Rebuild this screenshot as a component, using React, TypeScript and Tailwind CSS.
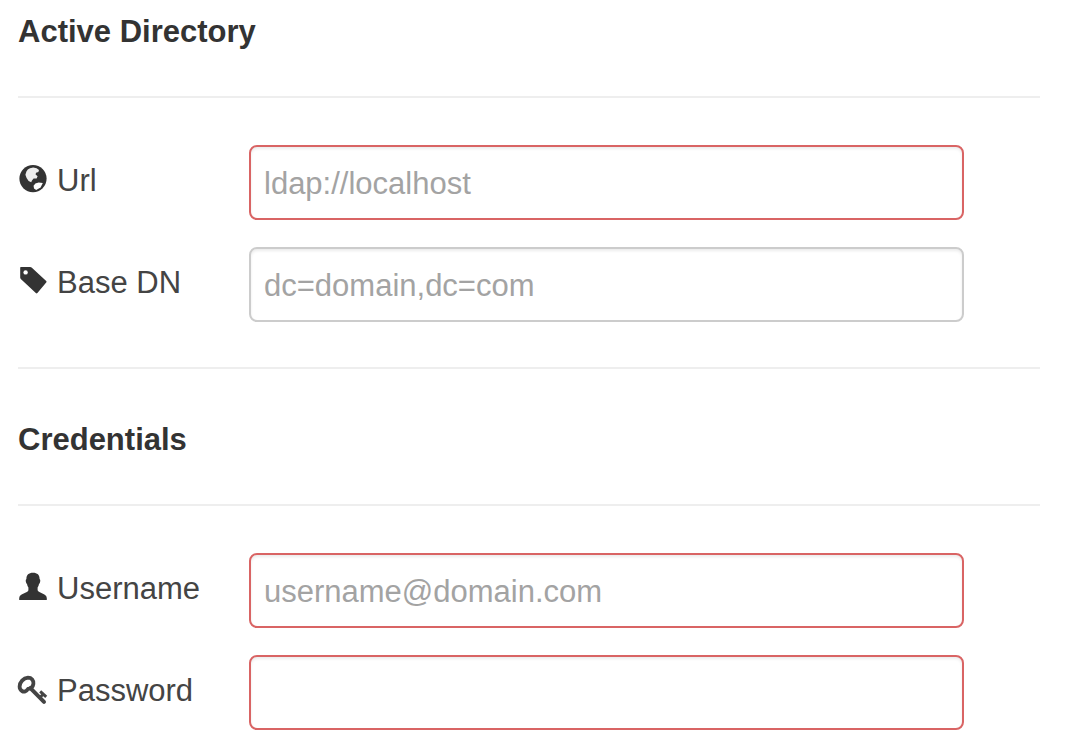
import type { ReactNode } from "react";

function Icon({ children }: { children: ReactNode }) {
  return (
    <svg
      aria-hidden="true"
      viewBox="0 0 30 30"
      className="mt-[3px] h-[30px] w-[30px] shrink-0 overflow-visible"
    >
      {children}
    </svg>
  );
}

const globe = (
  <Icon>
    <circle cx="15" cy="14.6" r="13.6" fill="#333" />
    <path
      d="M8.4 7.6 9.8 5.6 12 4.2 15.2 3.4 18.6 4.2 21 6 20.4 8 18 8.8 17.6 10.4 19.6 12.2 18.6 14.4 15.6 14.6 14 16.4 13.2 18.2 10.6 17 8.6 14 7.4 10.8Z"
      fill="#eee"
    />
    <path d="M15.6 21.8 17.4 19.4 20.6 18.4 24.8 19 22.6 23.6 18.2 26 16 24.6Z" fill="#fff" />
  </Icon>
);

const tag = (
  <Icon>
    <path
      d="M2.8 1H12.2Q13 1 13.6 1.6L28.2 15Q29 15.8 28.2 16.6L19.4 27Q18.6 27.8 17.8 27L2.8 13Q2.2 12.4 2.2 11.6V1.8Q2.2 1 2.8 1Z"
      fill="#333"
    />
    <circle cx="7.6" cy="6.4" r="2.2" fill="#fff" />
  </Icon>
);

const user = (
  <Icon>
    <path
      d="M15 .8C19.4 .8 21.6 3 21.6 7Q22.6 7.6 22.2 9.4Q21.8 11.4 21 12Q20.6 14.4 19.6 15.6V18.2Q20 19.4 21.4 20L26.4 22.4Q28.8 23.6 28.8 26V28H1.2V26Q1.2 23.6 3.6 22.4L8.8 20Q10.2 19.4 10.4 18.2V15.6Q9.4 14.4 9 12Q8.2 11.4 7.8 9.4Q7.4 7.6 8.4 7C8.4 3 10.6 .8 15 .8Z"
      fill="#333"
    />
  </Icon>
);

const key = (
  <Icon>
    <g fill="none" stroke="#444" strokeLinejoin="round">
      <path
        d="M1.6 12.6C1.6 8.2 5.4 4 10 3.6C13.6 3.6 15.8 6.4 15.4 9.8C15 13 12.8 14.6 10 15C8.4 17.4 6 18.2 4 17C2.2 16 1.6 14.4 1.6 12.6Z"
        strokeWidth="3.8"
      />
      <path d="M12.4 14.2 26 27.8" strokeWidth="4" strokeLinecap="round" />
      <path d="M22.2 17.4 28.2 22.8" strokeWidth="3" />
      <path d="M25.4 20 21.6 23.8" strokeWidth="2.8" />
    </g>
  </Icon>
);

type FieldProps = {
  id: string;
  label: string;
  icon: ReactNode;
  placeholder?: string;
  type?: string;
  invalid?: boolean;
};

function Field({ id, label, icon, placeholder, type = "text", invalid = false }: FieldProps) {
  return (
    <div className="flex items-start">
      <label htmlFor={id} className="flex w-[231px] shrink-0 gap-[9px] pt-4 text-[#444]">
        {icon}
        {label}
      </label>
      <input
        id={id}
        type={type}
        placeholder={placeholder}
        aria-invalid={invalid}
        className={`h-[75px] min-w-0 flex-1 rounded-lg border-2 bg-white px-[13px] pt-0.5 text-[#555] shadow-[inset_0_2px_3px_rgba(0,0,0,0.08)] outline-none placeholder:text-[#a3a3a3] focus:ring-2 focus:ring-[#d9e6f2] ${
          invalid ? "border-[#d96464]" : "border-[#ccc]"
        }`}
      />
    </div>
  );
}

function Section({ title, children }: { title: string; children: ReactNode }) {
  return (
    <section>
      <h2 className="font-bold text-[#333]">{title}</h2>
      <hr className="mt-11 mb-[47px] border-t-2 border-[#eee]" />
      <div className="flex flex-col gap-[27px] pr-[76px]">{children}</div>
    </section>
  );
}

export default function App() {
  return (
    <form className="bg-white pt-3 pr-[34px] pb-4 pl-[18px] font-['Liberation_Sans',Arial,sans-serif] text-[31px] leading-10">
      <Section title="Active Directory">
        <Field id="url" label="Url" icon={globe} placeholder="ldap://localhost" invalid />
        <Field id="base-dn" label="Base DN" icon={tag} placeholder="dc=domain,dc=com" />
      </Section>
      <hr className="mt-[45px] mb-[51px] border-t-2 border-[#eee]" />
      <Section title="Credentials">
        <Field id="username" label="Username" icon={user} placeholder="username@domain.com" invalid />
        <Field id="password" label="Password" icon={key} type="password" invalid />
      </Section>
    </form>
  );
}
